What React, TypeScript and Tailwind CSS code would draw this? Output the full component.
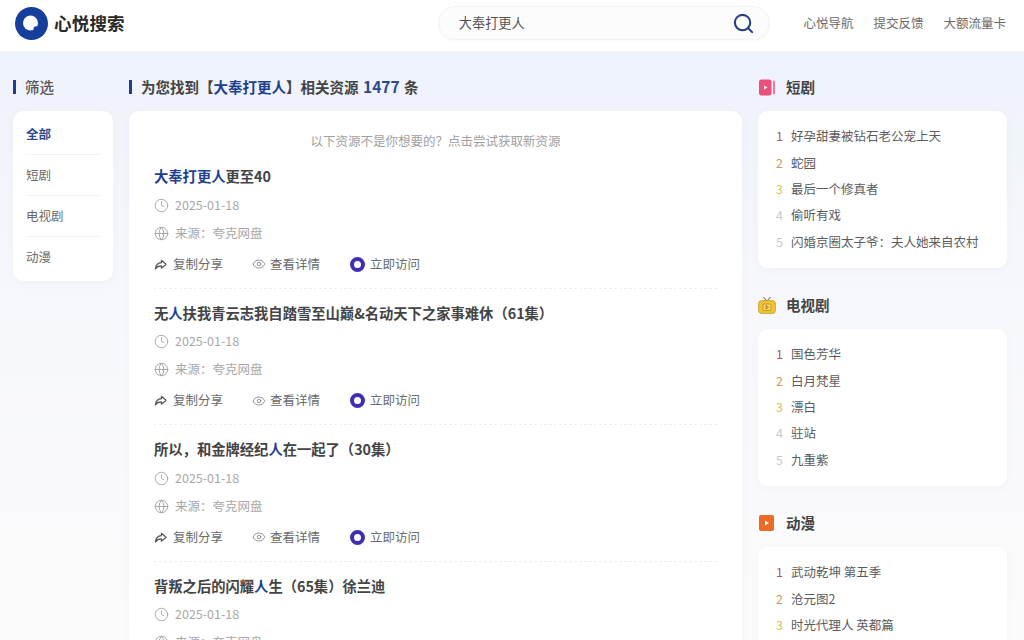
import React from "react";
import { Clock, Globe, Eye, Search } from "lucide-react";

const font = { fontFamily: '"Noto Sans CJK SC", "Noto Sans", sans-serif' };

const filters = ["全部", "短剧", "电视剧", "动漫"];

const results = [
  { title: <><span className="text-[#1e3f8f]">大奉打更人</span>更至40</> },
  { title: <>无<span className="text-[#1e3f8f]">人</span>扶我青云志我自踏雪至山巅&名动天下之家事难休（61集）</> },
  { title: <>所以，和金牌经纪<span className="text-[#1e3f8f]">人</span>在一起了（30集）</> },
  { title: <>背叛之后的闪耀<span className="text-[#1e3f8f]">人</span>生（65集）徐兰迪</> },
];

const rankColors = ["text-[#b0566e]", "text-[#c99c5a]", "text-[#d6c660]", "text-[#c8c8c8]", "text-[#c8c8c8]"];

function PinkIcon() {
  return (
    <svg width="16" height="17" viewBox="0 0 16 17">
      <rect x="0" y="0.5" width="12.5" height="16" rx="2.5" fill="#ec4f7c" />
      <rect x="14" y="1.5" width="2" height="14" rx="1" fill="#f4789a" />
      <path d="M5 6.500l3.500 2-3.500 2z" fill="#fff" />
    </svg>
  );
}

function TvIcon() {
  return (
    <svg width="18" height="18" viewBox="0 0 18 18">
      <path d="M5.500 1l3.500 4 3.500-4" fill="none" stroke="#6d6238" strokeWidth="1" />
      <rect x="0.6" y="4.600" width="16.800" height="12.800" rx="3" fill="#f2c430" stroke="#b8921e" strokeWidth="0.7" />
      <rect x="5" y="8" width="8" height="6.500" rx="1.200" fill="#f7d765" stroke="#9a7a16" strokeWidth="0.6" />
      <path d="M8 9.500l2.400 1.800L8 13z" fill="none" stroke="#8a6f14" strokeWidth="0.8" />
    </svg>
  );
}

function OrangeIcon() {
  return (
    <svg width="16" height="16" viewBox="0 0 16 16">
      <rect x="0" y="0" width="15" height="16" rx="2" fill="#ea6a26" />
      <path d="M6 5.500l4 2.500-4 2.500z" fill="#fff" />
    </svg>
  );
}

function Logo() {
  return (
    <svg width="33" height="33" viewBox="0 0 33 33">
      <circle cx="16.500" cy="16.500" r="16.500" fill="#163f9c" />
      <circle cx="15.500" cy="16" r="7.500" fill="#fff" />
      <circle cx="21.300" cy="22" r="2.800" fill="#163f9c" />
    </svg>
  );
}

// outlined share arrow, lucide's Forward is too thin for this one
function ShareIcon() {
  return (
    <svg width="13" height="13" viewBox="0 0 14 14" fill="none" stroke="#555" strokeWidth="1.300" strokeLinejoin="round">
      <path d="M8 2.500l5 4.300-5 4.200V8.500c-2.800 0-4.900 1-6.500 3.300.3-3.800 2.800-6.500 6.500-6.800z" />
    </svg>
  );
}

function Bar() {
  return <span className="mr-[9px] h-[14px] w-[3px] bg-[#1e3f8f]" />;
}

function RankCard({ icon, title, items, className }: { icon: React.ReactNode; title: string; items: string[]; className: string }) {
  return (
    <section className={className}>
      <div className="flex h-[24px] items-center">
        <span className="flex w-[18px] justify-center">{icon}</span>
        <h3 className="ml-[10px] text-[14.5px] font-semibold text-[#444]">{title}</h3>
      </div>
      <ul className="mt-[12px] rounded-[10px] bg-white px-[18px] pb-[12.5px] pt-[12.5px] shadow-[0_2px_8px_rgba(90,110,170,0.05)]">
        {items.map((item, i) => (
          <li key={item} className="flex h-[26.4px] items-center text-[12.5px] text-[#5c5c5c]">
            <span className={`w-[15px] text-[12.5px] ${rankColors[i]}`}>{i + 1}</span>
            {item}
          </li>
        ))}
      </ul>
    </section>
  );
}

export default function App() {
  return (
    <div style={font} className="h-[640px] w-[1024px] overflow-hidden bg-gradient-to-b from-[#edf1fb] via-[#f7f8fc] to-[#fbfbfb]">
      <header className="flex h-[51px] items-center bg-white pb-[5px] pl-[15px] pr-[18px]">
        <Logo />
        <span className="ml-[6px] text-[17.5px] font-bold tracking-[0.2px] text-[#2a2a2a]">心悦搜索</span>
        <div className="ml-[313px] flex h-[34px] w-[332px] items-center rounded-full border border-[#f3f3f5] bg-[#fcfcfd] pl-[20px] pr-[14px] shadow-[0_1px_3px_rgba(0,0,0,0.03)]">
          <span className="flex-1 text-[13.2px] text-[#555]">大奉打更人</span>
          <Search size={23} strokeWidth={2.2} className="text-[#24407f]" />
        </div>
        <nav className="ml-auto flex gap-[20px] text-[12.5px] text-[#6a6a6a]">
          <span>心悦导航</span>
          <span>提交反馈</span>
          <span>大额流量卡</span>
        </nav>
      </header>

      <main className="flex gap-[16px] pl-[13px] pr-[17px] pt-[24px]">
        <aside className="w-[100px] shrink-0">
          <div className="flex h-[24px] items-center text-[14.5px] font-medium text-[#555]">
            <Bar />
            筛选
          </div>
          <ul className="mt-[12px] rounded-[10px] bg-white px-[13px] py-[3px] shadow-[0_2px_8px_rgba(90,110,170,0.05)]">
            {filters.map((f, i) => (
              <li key={f} className={`flex h-[41px] items-center text-[12.5px] ${i === 0 ? "font-semibold text-[#2d4a8a]" : "text-[#6a6a6a]"} ${i < 3 ? "border-b border-[#f3f3f5]" : ""}`}>
                {f}
              </li>
            ))}
          </ul>
        </aside>

        <div className="w-[613px] shrink-0">
          <h2 className="flex h-[24px] items-center text-[14.5px] font-semibold text-[#444]">
            <Bar />
            为您找到【<span className="text-[#1e3f8f]">大奉打更人</span>】相关资源
            <span className="mx-[4.5px] text-[15.5px] text-[#2d4a8a]">1477</span>条
          </h2>
          <div className="mt-[12px] rounded-[10px] bg-white px-[25px] pt-[20px] shadow-[0_2px_8px_rgba(90,110,170,0.05)]">
            <p className="text-center text-[12.5px] leading-[20px] text-[#a0a0a0]">以下资源不是你想要的？点击尝试获取新资源</p>
            <div className="mt-[12px]">
              {results.map((r, i) => (
                <article key={i} className="mb-[11px] h-[125.6px] border-b border-dashed border-[#efeff1]">
                  <h3 className="h-[26px] text-[14.3px] font-semibold leading-[26px] text-[#444]">{r.title}</h3>
                  <div className="mt-[7px] flex h-[18px] items-center gap-[6px] text-[12.5px] text-[#a8a8a8]">
                    <Clock size={15} strokeWidth={1.5} />
                    <span>2025-01-18</span>
                  </div>
                  <div className="mt-[10px] flex h-[18px] items-center gap-[6px] text-[12.5px] text-[#a8a8a8]">
                    <Globe size={15} strokeWidth={1.6} />
                    <span>来源：夸克网盘</span>
                  </div>
                  <div className="mt-[13px] flex h-[18px] items-center text-[12.5px] text-[#6a6a6a]">
                    <ShareIcon />
                    <span className="ml-[6px]">复制分享</span>
                    <Eye size={14} strokeWidth={1.3} className="ml-[29px] text-[#777]" />
                    <span className="ml-[4px]">查看详情</span>
                    <span className="ml-[30px] h-[15px] w-[15px] rounded-full border-[4px] border-[#3d2fb0]" />
                    <span className="ml-[5px]">立即访问</span>
                  </div>
                </article>
              ))}
            </div>
          </div>
        </div>

        <aside className="w-[249px] shrink-0">
          <RankCard className="" icon={<PinkIcon />} title="短剧" items={["好孕甜妻被钻石老公宠上天", "蛇园", "最后一个修真者", "偷听有戏", "闪婚京圈太子爷：夫人她来自农村"]} />
          <RankCard className="mt-[25px]" icon={<TvIcon />} title="电视剧" items={["国色芳华", "白月梵星", "漂白", "驻站", "九重紫"]} />
          <RankCard className="mt-[25px]" icon={<OrangeIcon />} title="动漫" items={["武动乾坤 第五季", "沧元图2", "时光代理人 英都篇", "凡人修仙传", "斗破苍穹"]} />
        </aside>
      </main>
    </div>
  );
}
